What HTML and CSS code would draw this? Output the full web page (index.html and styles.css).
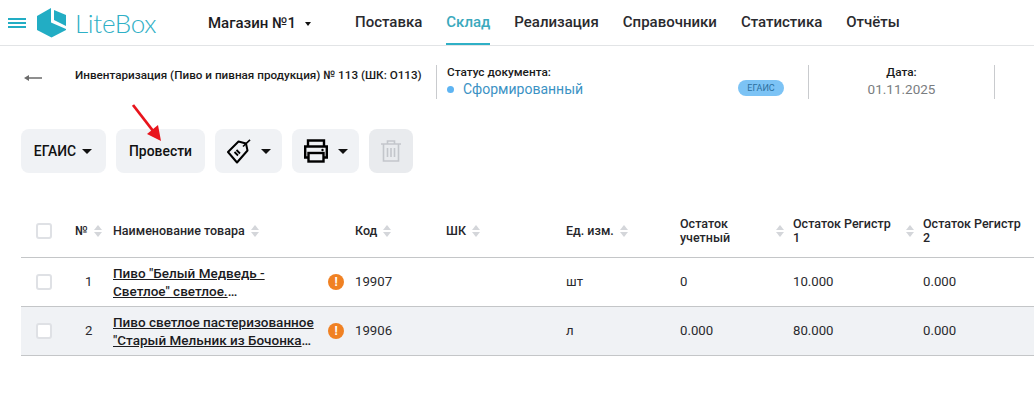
FILE: index.html
```html
<!DOCTYPE html>
<html lang="ru">
<head>
    <meta charset="UTF-8">
    <title>LiteBox</title>
    <link rel="stylesheet" href="styles.css">
</head>
<body>
    <header class="topbar">
        <div class="burger"><span></span><span></span><span></span></div>
        <div class="logo">
            <svg class="logo-mark" width="30" height="30" viewBox="0 0 30 30">
                <path fill="#22adc4" d="M14 0 L0 8 V22 L14.5 29.5 L29 22 V21 L14 14.5 Z"/>
                <path fill="#22adc4" d="M17 2 L29 7 V18 L17 12 Z"/>
            </svg>
            <span class="logo-text">LiteBox</span>
        </div>
        <div class="shop">Магазин №1 <i class="caret caret-sm"></i></div>
        <nav class="tabs">
            <a class="tab">Поставка</a>
            <a class="tab active">Склад</a>
            <a class="tab">Реализация</a>
            <a class="tab">Справочники</a>
            <a class="tab">Статистика</a>
            <a class="tab">Отчёты</a>
        </nav>
    </header>

    <section class="doc">
        <svg class="back" width="18" height="8" viewBox="0 0 18 8">
            <path fill="#6b6b6b" d="M0 4 L5 1 L5 3.2 L18 3.2 L18 4.8 L5 4.8 L5 7 Z"/>
        </svg>
        <div class="doc-title">Инвентаризация (Пиво и пивная продукция) № 113 (ШК: О113)</div>
        <div class="doc-status">
            <div class="doc-label">Статус документа:</div>
            <div class="status-value"><i class="dot"></i>Сформированный</div>
            <span class="badge">ЕГАИС</span>
        </div>
        <div class="doc-date">
            <div class="doc-label">Дата:</div>
            <div class="date-value">01.11.2025</div>
        </div>
    </section>

    <section class="toolbar">
        <button class="btn btn-egais">ЕГАИС <i class="caret"></i></button>
        <button class="btn btn-post">Провести</button>
        <button class="btn btn-icon">
            <svg width="24" height="25" viewBox="0 0 24 25" fill="none" stroke="#000" stroke-width="2">
                <path d="M1 13 L11.5 2.5 L19 4.5 L20.5 11.5 L10 23.5 Z" stroke-linejoin="round"/>
                <path d="M16 7.5 L23 0.8" stroke-width="1.6"/>
                <path d="M7.5 13 L11 16.5 M9.5 11 L13 14.5" stroke-width="1.8"/>
            </svg>
            <i class="caret"></i>
        </button>
        <button class="btn btn-icon">
            <svg width="24" height="24" viewBox="0 0 24 24" fill="none" stroke="#000" stroke-width="2.4">
                <path d="M4 7 V1.5 H20 V7"/>
                <path d="M4 18.5 H1.2 V7.5 H22.8 V18.5 H20"/>
                <rect x="4.5" y="14" width="15" height="8.5"/>
                <circle cx="18.5" cy="11" r="1.2" fill="#000" stroke="none"/>
            </svg>
            <i class="caret"></i>
        </button>
        <button class="btn btn-trash">
            <svg width="20" height="22" viewBox="0 0 20 22" fill="none" stroke="#c3c6cb" stroke-width="1.6">
                <path d="M0 4 H20 M6.5 4 V1 H13.5 V4"/>
                <path d="M2.5 4 V21 H17.5 V4"/>
                <path d="M6.5 8 V17 M10 8 V17 M13.5 8 V17"/>
            </svg>
        </button>
        <svg class="arrow" width="34" height="42" viewBox="0 0 34 42">
            <path fill="none" stroke="#e8141c" stroke-width="2.8" d="M2 2 L26 33"/>
            <path fill="#e8141c" d="M30 38 L16 31 L27 22 Z"/>
        </svg>
    </section>

    <table class="goods">
        <colgroup>
            <col class="c-check"><col class="c-num"><col class="c-name"><col class="c-code"><col class="c-bar">
            <col class="c-unit"><col class="c-rest"><col class="c-reg1"><col class="c-reg2">
        </colgroup>
        <thead>
            <tr>
                <th><i class="check"></i></th>
                <th>№<i class="sort"></i></th>
                <th>Наименование товара<i class="sort"></i></th>
                <th>Код<i class="sort"></i></th>
                <th>ШК<i class="sort"></i></th>
                <th>Ед. изм.<i class="sort"></i></th>
                <th><div class="th-wrap"><span>Остаток учетный</span></div></th>
                <th><div class="th-wrap"><i class="sort sort-left"></i><span>Остаток Регистр 1</span></div></th>
                <th><div class="th-wrap"><i class="sort sort-left"></i><span>Остаток Регистр 2</span></div></th>
            </tr>
        </thead>
        <tbody>
            <tr>
                <td><i class="check"></i></td>
                <td class="num">1</td>
                <td><div class="name-cell"><a class="name"><span class="name-text">Пиво "Белый Медведь - Светлое" светлое.</span>…</a><i class="warn">!</i></div></td>
                <td>19907</td>
                <td></td>
                <td>шт</td>
                <td>0</td>
                <td>10.000</td>
                <td>0.000</td>
            </tr>
            <tr class="alt">
                <td><i class="check"></i></td>
                <td class="num">2</td>
                <td><div class="name-cell"><a class="name"><span class="name-text">Пиво светлое пастеризованное "Старый Мельник из Бочонка</span>…</a><i class="warn">!</i></div></td>
                <td>19906</td>
                <td></td>
                <td>л</td>
                <td>0.000</td>
                <td>80.000</td>
                <td>0.000</td>
            </tr>
        </tbody>
    </table>
</body>
</html>
```

FILE: styles.css
```css
* {
    margin: 0;
    padding: 0;
    box-sizing: border-box;
}

body {
    background: #fff;
    color: #1c1c1f;
    font-family: Roboto, sans-serif;
    overflow: hidden;
}

.topbar {
    display: flex;
    align-items: center;
    height: 46px;
    border-bottom: 1px solid #e2e4e6;
    padding-left: 8px;
}

.burger {
    display: flex;
    flex-direction: column;
    gap: 2px;
    width: 18px;
}

.burger span {
    height: 2px;
    background: #22adc4;
}

.logo {
    display: flex;
    align-items: center;
    margin-left: 11px;
    width: 171px;
}

.logo-text {
    font-family: Lato, sans-serif;
    font-weight: 300;
    font-size: 26px;
    letter-spacing: -0.3px;
    color: #2fb0c6;
    margin-left: 8px;
}

.shop {
    font-size: 15px;
    font-weight: 500;
    width: 147px;
    white-space: nowrap;
}

.caret {
    display: inline-block;
    width: 0;
    height: 0;
    border-left: 5px solid transparent;
    border-right: 5px solid transparent;
    border-top: 5px solid #111;
    vertical-align: middle;
    margin-left: 4px;
}

.caret-sm {
    border-left-width: 3.5px;
    border-right-width: 3.5px;
    border-top-width: 4px;
    margin-left: 5px;
}

.tabs {
    display: flex;
    gap: 24px;
    height: 45px;
}

.tab {
    font-size: 15px;
    font-weight: 500;
    line-height: 45px;
    color: #2a2a2e;
}

.tab.active {
    color: #3aa9bd;
    border-bottom: 2px solid #2fb0c6;
}

.doc {
    display: flex;
    align-items: flex-start;
    margin-top: 19px;
    height: 34px;
    padding-left: 24px;
}

.back {
    margin-top: 9px;
    flex: none;
}

.doc-title {
    margin-left: 33px;
    margin-top: 3px;
    width: 361px;
    flex: none;
    font-size: 11.7px;
    font-weight: 500;
    white-space: nowrap;
    color: #1a1a1a;
}

.doc-status {
    position: relative;
    width: 372px;
    height: 34px;
    border-left: 1px solid #c9cbce;
    padding-left: 10px;
}

.doc-label {
    font-size: 11.8px;
    font-weight: 500;
    line-height: 14px;
    color: #1a1a1a;
}

.status-value {
    font-size: 14px;
    line-height: 18px;
    color: #3b92c4;
    margin-top: 1px;
}

.dot {
    display: inline-block;
    width: 7px;
    height: 7px;
    border-radius: 50%;
    background: #5eb4f2;
    margin-right: 9px;
    vertical-align: 1px;
}

.badge {
    position: absolute;
    left: 301px;
    top: 15px;
    width: 46px;
    height: 16px;
    border-radius: 8px;
    background: #7cc3f5;
    color: #2b6f9e;
    font-size: 9px;
    line-height: 16px;
    text-align: center;
}

.doc-date {
    width: 187px;
    height: 34px;
    border-left: 1px solid #c9cbce;
    border-right: 1px solid #c9cbce;
    text-align: center;
}

.date-value {
    font-size: 13.5px;
    line-height: 18px;
    margin-top: 1px;
    color: #7a7d80;
}

.toolbar {
    position: relative;
    display: flex;
    gap: 10px;
    margin-top: 30px;
    padding-left: 21px;
}

.btn {
    display: flex;
    align-items: center;
    justify-content: center;
    height: 44px;
    border: none;
    border-radius: 8px;
    background: #f0f2f5;
    font-family: Roboto, sans-serif;
    font-size: 13.9px;
    font-weight: 500;
    color: #111;
}

.btn-egais {
    width: 85px;
    gap: 2px;
    padding-right: 1px;
}

.btn-post {
    width: 89px;
}

.btn-icon {
    width: 67px;
    gap: 10px;
}

.btn-icon .caret {
    margin-left: 0;
}

.btn-trash {
    width: 44px;
    background: #e9ebee;
}

.arrow {
    position: absolute;
    left: 131px;
    top: -26px;
}

.goods {
    border-collapse: collapse;
    table-layout: fixed;
    width: 1013px;
    margin-top: 32px;
    margin-left: 21px;
    font-size: 13.2px;
}

.c-check { width: 54px; }
.c-num { width: 38px; }
.c-name { width: 242px; }
.c-code { width: 91px; }
.c-bar { width: 120px; }
.c-unit { width: 114px; }
.c-rest { width: 113px; }
.c-reg1 { width: 130px; }
.c-reg2 { width: 111px; }

.goods th {
    height: 52px;
    font-size: 12.5px;
    font-weight: 500;
    line-height: 14px;
    text-align: left;
    color: #26262a;
    border-bottom: 1px solid #c4c6c8;
    white-space: nowrap;
}

.goods td {
    height: 49px;
    border-bottom: 1px solid #c4c6c8;
    color: #2a2a2e;
    vertical-align: middle;
}

.goods tr.alt td {
    background: #f0f2f5;
}

.goods th:first-child,
.goods td:first-child {
    padding-left: 15px;
}

.num {
    padding-left: 10px;
}

.check {
    display: block;
    width: 16px;
    height: 16px;
    border: 2px solid #dfe1e5;
    border-radius: 3px;
    background: #fff;
}

.sort {
    display: inline-block;
    position: relative;
    width: 9px;
    height: 12px;
    margin-left: 6px;
    vertical-align: middle;
}

.sort::before,
.sort::after {
    content: "";
    position: absolute;
    left: 0;
    border-left: 4.5px solid transparent;
    border-right: 4.5px solid transparent;
}

.sort::before {
    top: 0;
    border-bottom: 5px solid #d4d6da;
}

.sort::after {
    bottom: 0;
    border-top: 5px solid #d4d6da;
}

.th-wrap {
    display: flex;
    align-items: center;
}

.th-wrap span {
    white-space: normal;
    width: 100px;
}

.sort-left {
    flex: none;
    margin-left: -17px;
    margin-right: 8px;
}

.name-cell {
    display: flex;
    align-items: center;
    justify-content: space-between;
    padding-right: 11px;
}

.name {
    width: 205px;
    font-weight: 500;
    font-size: 13.5px;
    line-height: 18px;
    color: #1c1c1f;
}

.name-text {
    text-decoration: underline;
}

.warn {
    display: block;
    flex: none;
    width: 16px;
    height: 16px;
    border-radius: 50%;
    background: #f08123;
    color: #fff;
    font-style: normal;
    font-weight: 700;
    font-size: 12px;
    line-height: 16px;
    text-align: center;
}
```
